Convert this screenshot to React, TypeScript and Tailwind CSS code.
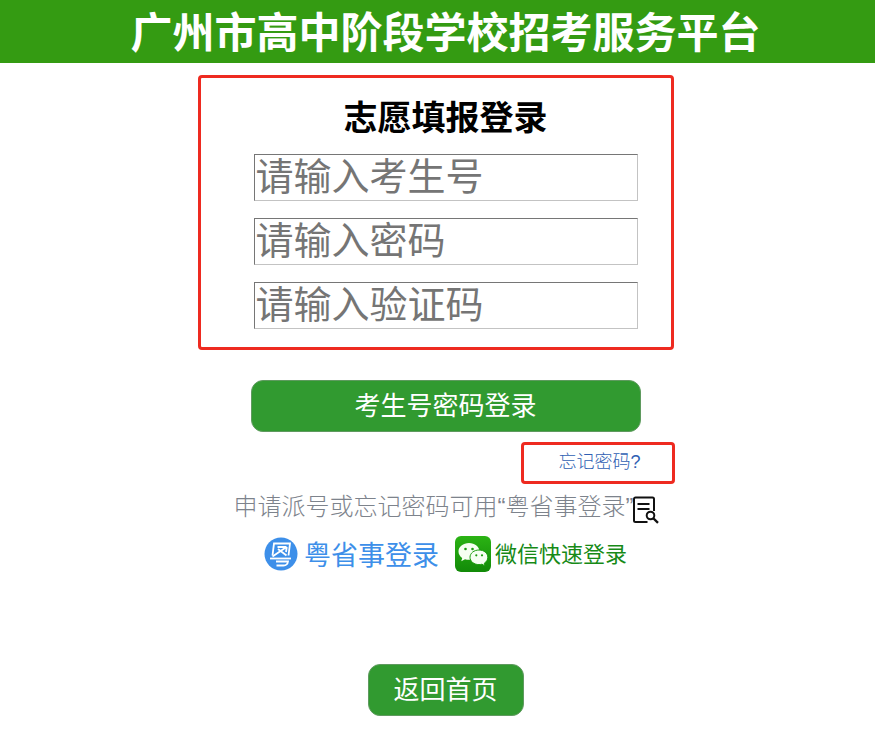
import { useState } from 'react'

interface LoginField {
  id: string
  type: string
  label: string
}

const fields: LoginField[] = [
  { id: 'examNo', type: 'text', label: '请输入考生号' },
  { id: 'password', type: 'password', label: '请输入密码' },
  { id: 'captcha', type: 'text', label: '请输入验证码' },
]

function SearchDocIcon() {
  return (
    <svg className="h-7 w-7 shrink-0" viewBox="0 0 28 28" fill="none" stroke="#111111" strokeWidth={2}>
      <path d="M14.500 26H2.500A1.500 1.500 0 0 1 1 24.500V3a1.500 1.500 0 0 1 1.500-1.500h17A1.500 1.500 0 0 1 21 3v12" />
      <path d="M4.500 8h12M4.500 13h12" />
      <circle cx="17.500" cy="19.500" r="3.800" />
      <path d="M20 22l5 4.800" strokeWidth={2.4} />
    </svg>
  )
}

function YueIcon() {
  return (
    <svg className="h-[34px] w-[34px] shrink-0" viewBox="0 0 34 34" fill="none">
      <circle cx="17" cy="17" r="16.500" fill="#3d8fe9" />
      <g stroke="#ffffff" strokeWidth={1.8}>
        <path d="M8.500 18.500L10 6.500H26L24.500 18.500" />
        <path d="M13.500 10h9M22.500 10L8.500 19.500M14 12l8.500 6.500M22.800 10l-.8 5" />
        <path d="M6 21.500h21" />
        <path d="M12 24.500h12c-.4 3-1.800 4-4.500 4h-7" />
      </g>
    </svg>
  )
}

function WechatIcon() {
  return (
    <svg className="h-9 w-9 shrink-0" viewBox="0 0 36 36">
      <defs>
        <linearGradient id="wechatBg" x1="0" y1="0" x2="0" y2="1">
          <stop offset="0" stopColor="#2bb314" />
          <stop offset="1" stopColor="#128a08" />
        </linearGradient>
      </defs>
      <rect width="36" height="36" rx="6" fill="url(#wechatBg)" />
      <path
        d="M14 7C8.200 7 3.500 10.600 3.500 15.500c0 2.600 1.400 4.900 3.700 6.400l-.9 3.300 3.700-2c1.200.4 2.600.5 4 .5 5.800 0 10.500-3.600 10.500-8.200S19.800 7 14 7z"
        fill="#f6fff2"
      />
      <path
        d="M24 14c-5 0-9 3.200-9 7.300s4 7.300 9 7.300c1 0 2.100-.2 3-.4l3 1.700-.7-2.700c2.200-1.300 3.500-3.500 3.500-5.900 0-4.100-3.800-7.300-8.800-7.300z"
        fill="#f6fff2"
        stroke="#1c9c0e"
        strokeWidth={1}
      />
      <g fill="#1c9c0e">
        <circle cx="10.500" cy="13" r="1.300" />
        <circle cx="17.500" cy="13" r="1.300" />
        <circle cx="21.300" cy="19.300" r="1.100" />
        <circle cx="27" cy="19.300" r="1.100" />
      </g>
    </svg>
  )
}

export default function App() {
  const [values, setValues] = useState<Record<string, string>>({})

  const handleChange = (id: string, value: string) => {
    setValues({ ...values, [id]: value })
  }

  return (
    <div className="min-h-screen bg-white font-['Liberation_Sans','Noto_Sans_CJK_SC',sans-serif] text-black">
      <header className="bg-[#349b12] pt-1 pl-4">
        <h1 className="text-center text-[42px] leading-[59px] font-bold whitespace-nowrap text-white">
          广州市高中阶段学校招考服务平台
        </h1>
      </header>

      <main className="flex flex-col items-center pt-3 pl-4">
        <form className="w-[390px]" onSubmit={(e) => e.preventDefault()}>
          <div className="relative px-[3px] pt-[18px] pb-[21px]">
            <h2 className="mb-[10px] text-center text-[34px] leading-[51px] font-bold">志愿填报登录</h2>
            <div className="space-y-[17px]">
              {fields.map((field) => (
                <input
                  key={field.id}
                  id={field.id}
                  type={field.type}
                  aria-label={field.label}
                  placeholder={field.label}
                  value={values[field.id] || ''}
                  onChange={(e) => handleChange(field.id, e.target.value)}
                  className="block h-[47px] w-full border border-t-[#767676] border-r-[#c3c3c3] border-b-[#c3c3c3] border-l-[#767676] bg-white px-px text-[38px] leading-[45px] outline-none placeholder:text-[#757575]"
                />
              ))}
            </div>
            {/* 红框标注 */}
            <div className="pointer-events-none absolute top-0 -right-[33px] bottom-0 -left-[53px] rounded-sm border-3 border-[#ee2a20]" />
          </div>

          <button
            type="submit"
            className="mt-[30px] block h-[52px] w-full rounded-xl border border-[#5f9a5f] bg-[#319a30] text-[26px] leading-[50px] text-white"
          >
            考生号密码登录
          </button>

          <div className="mt-5 flex justify-end">
            <a href="#forgot" className="relative text-[18px] leading-5 font-light text-[#2f5fb3]">
              忘记密码?
              <span className="pointer-events-none absolute -top-2.5 -right-[34px] -bottom-3 -left-[37px] rounded-sm border-3 border-[#ee2a20]" />
            </a>
          </div>
        </form>

        <div className="mt-[18px] flex items-end pl-1">
          <p className="text-[24px] leading-[34px] font-light whitespace-nowrap text-[#7d838c]">
            申请派号或忘记密码可用“粤省事登录”
          </p>
          <SearchDocIcon />
        </div>

        <div className="mt-2.5 flex items-center gap-4">
          <a href="#yss" className="flex items-center gap-1.5 text-[27px] leading-9 text-[#3d8fe9]">
            <YueIcon />
            <span className="pt-1">粤省事登录</span>
          </a>
          <a href="#wechat" className="flex items-center gap-1 text-[22px] leading-9 text-[#178a17]">
            <WechatIcon />
            <span className="pt-0.5">微信快速登录</span>
          </a>
        </div>

        <button
          type="button"
          className="mt-[90px] mb-10 h-[52px] w-[156px] rounded-xl border border-[#5f9a5f] bg-[#319a30] text-[26px] leading-[50px] text-white"
        >
          返回首页
        </button>
      </main>
    </div>
  )
}
